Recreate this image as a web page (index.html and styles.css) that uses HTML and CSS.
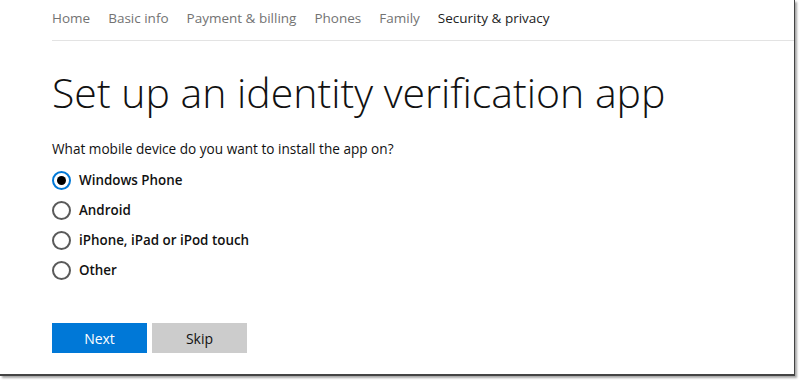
FILE: index.html
```html
<!DOCTYPE html>
<html>
<head>
<meta charset="utf-8">
<link rel="stylesheet" href="styles.css">
</head>
<body>
<div class="frame">
  <nav class="nav">
    <a class="nav-item">Home</a>
    <a class="nav-item">Basic info</a>
    <a class="nav-item">Payment &amp; billing</a>
    <a class="nav-item">Phones</a>
    <a class="nav-item">Family</a>
    <a class="nav-item active">Security &amp; privacy</a>
  </nav>
  <main class="content">
    <h1 class="title">Set up an identity verification app</h1>
    <p class="question">What mobile device do you want to install the app on?</p>
    <div class="options">
      <label class="option"><span class="radio checked"></span><span class="label">Windows Phone</span></label>
      <label class="option"><span class="radio"></span><span class="label">Android</span></label>
      <label class="option"><span class="radio"></span><span class="label">iPhone, iPad or iPod touch</span></label>
      <label class="option"><span class="radio"></span><span class="label">Other</span></label>
    </div>
    <div class="buttons">
      <button class="btn primary">Next</button>
      <button class="btn secondary">Skip</button>
    </div>
  </main>
</div>
</body>
</html>
```

FILE: styles.css
```css
html, body {
  margin: 0;
  padding: 0;
  background: #fff;
}
body {
  font-family: "Open Sans", "Noto Sans", sans-serif;
  color: #000;
  width: 799px;
  height: 381px;
  overflow: hidden;
}
.frame {
  width: 795px;
  height: 376px;
  box-sizing: border-box;
  border-right: 1px solid #444;
  border-bottom: 2px solid #444;
  box-shadow: 2px 2px 2px rgba(0,0,0,0.35);
  background: #fff;
  padding-left: 52px;
}
.nav {
  display: flex;
  gap: 18px;
  height: 41px;
  box-sizing: border-box;
  padding-top: 8px;
  border-bottom: 1px solid #e3e3e3;
  font-size: 13.5px;
  line-height: 20px;
}
.nav-item {
  color: #737373;
}
.nav-item.active {
  color: #222;
}
.content {
  padding-top: 26px;
}
.title {
  margin: 0;
  font-weight: 300;
  font-size: 41px;
  line-height: 50px;
  color: #111;
}
.question {
  margin: 22px 0 0;
  font-size: 13.6px;
  line-height: 20px;
  color: #111;
}
.options {
  margin-top: 6px;
  display: flex;
  flex-direction: column;
}
.option {
  display: flex;
  align-items: center;
  height: 30px;
  gap: 8px;
}
.radio {
  width: 19px;
  height: 19px;
  box-sizing: border-box;
  border: 2px solid #5a5a5a;
  border-radius: 50%;
  display: flex;
  align-items: center;
  justify-content: center;
}
.radio.checked {
  border-color: #0078d7;
}
.radio.checked::after {
  content: "";
  width: 9px;
  height: 9px;
  border-radius: 50%;
  background: #000;
}
.label {
  font-size: 13.4px;
  font-weight: 600;
  color: #111;
}
.buttons {
  margin-top: 38px;
  display: flex;
  gap: 5px;
}
.btn {
  width: 95px;
  height: 30px;
  border: none;
  font-family: inherit;
  font-size: 14px;
  padding: 0;
}
.btn.primary {
  background: #0078d7;
  color: #fff;
}
.btn.secondary {
  background: #cccccc;
  color: #111;
}
```
